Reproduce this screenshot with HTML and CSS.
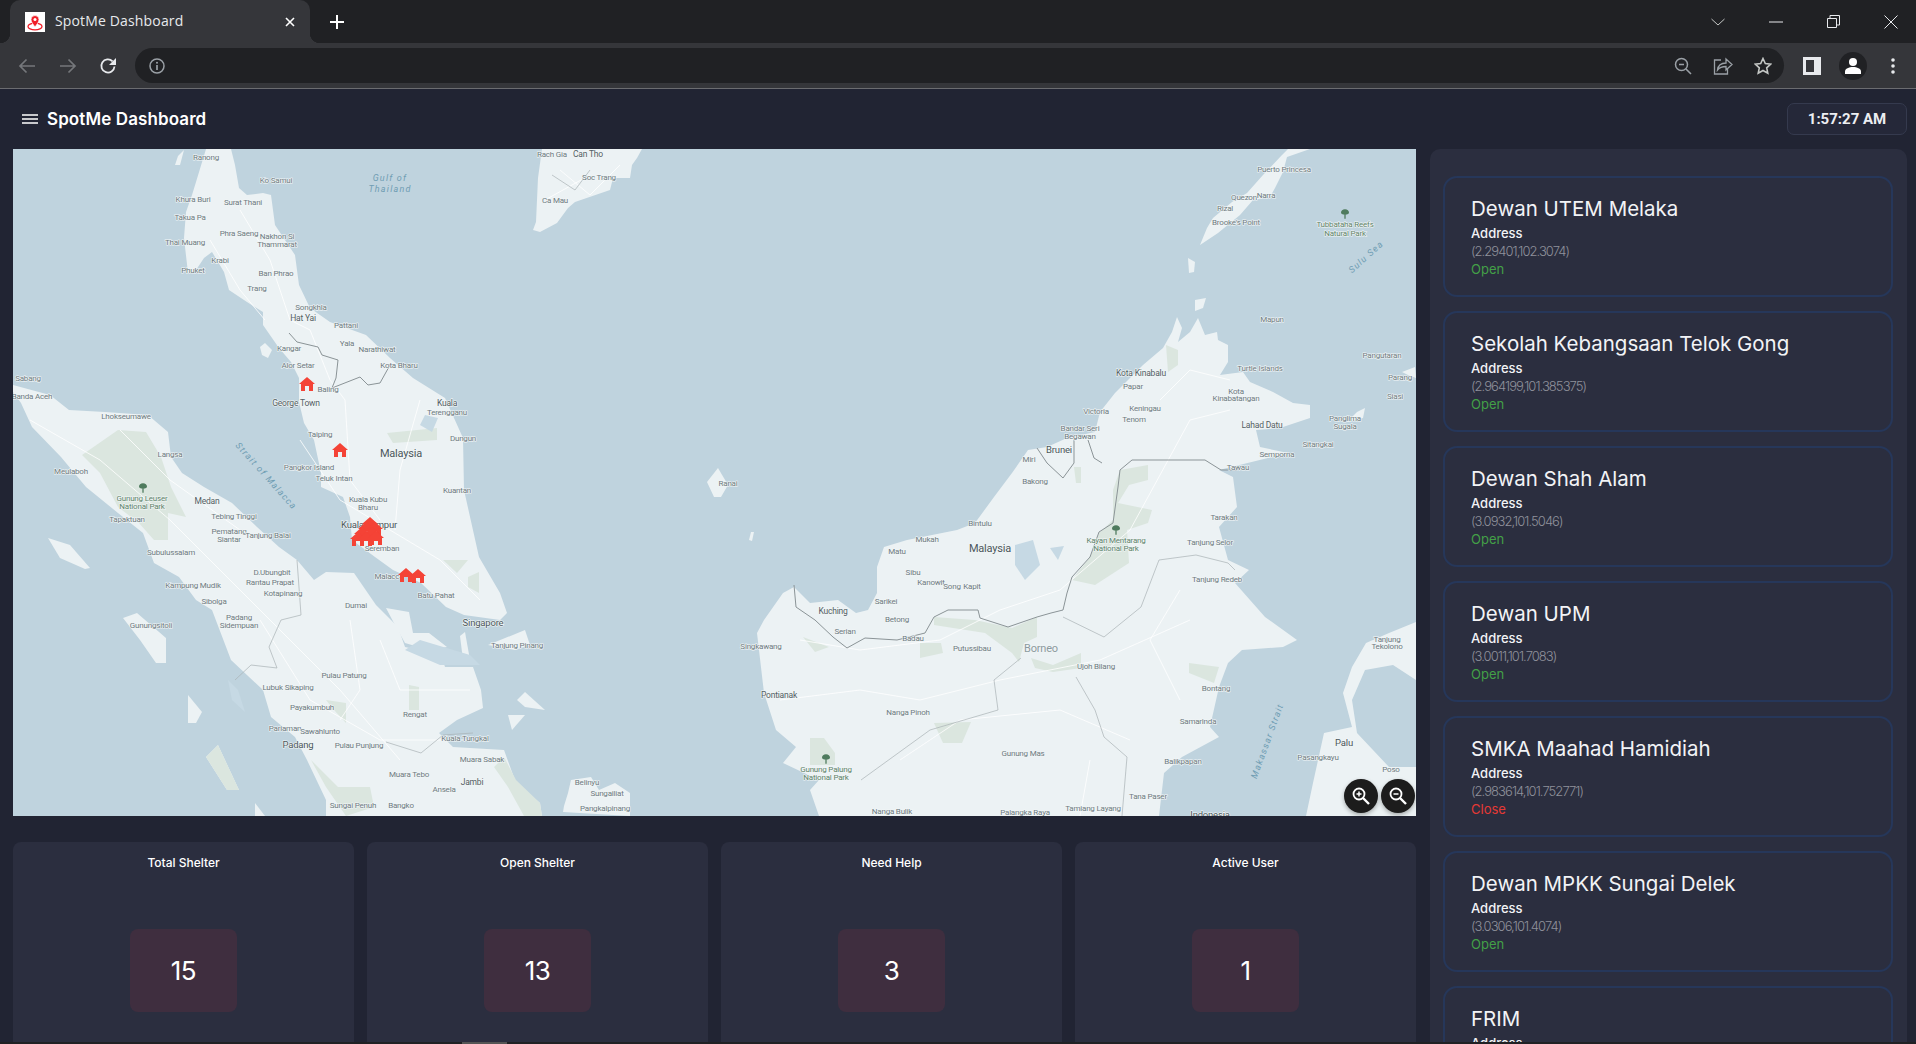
FILE: index.html
```html
<!DOCTYPE html>
<html lang="en">
<head>
    <meta charset="UTF-8">
    <meta name="viewport" content="width=device-width, initial-scale=1.0">
    <title>SpotMe Dashboard</title>
    <link rel="stylesheet" href="styles.css">
</head>
<body>
    <div class="tabstrip">
        <div class="tab">
            <span class="favicon">
                <svg width="20" height="20" viewBox="0 0 20 20">
                    <ellipse cx="10" cy="14.5" rx="7" ry="3.4" fill="none" stroke="#f01e28" stroke-width="1.3"/>
                    <path d="M10 15c-2-3-4-5-4-7.5a4 4 0 0 1 8 0C14 10 12 12 10 15z" fill="#f01e28" stroke="#fff" stroke-width=".7"/>
                    <circle cx="10" cy="7.5" r="1.5" fill="#fff"/>
                </svg>
            </span>
            <span class="tab-title">SpotMe Dashboard</span>
            <svg class="tab-close" width="10" height="10" viewBox="0 0 10 10"><path d="M1 1l8 8M9 1l-8 8" stroke="#fff" stroke-width="1.6"/></svg>
        </div>
        <svg class="new-tab" width="16" height="16" viewBox="0 0 16 16"><path d="M8 1v14M1 8h14" stroke="#fff" stroke-width="2"/></svg>
        <div class="window-btns">
            <svg width="14" height="8" viewBox="0 0 14 8"><path d="M.5 1L7 7l6.500-6" fill="none" stroke="#c4c7c5" stroke-width="1"/></svg>
            <svg width="14" height="2" viewBox="0 0 14 2"><path d="M0 1h14" stroke="#e8eaed" stroke-width="1"/></svg>
            <svg width="13" height="13" viewBox="0 0 13 13"><path d="M.5 3.500h9v9h-9zM3 3.500V.5h9.500V10H9.500" fill="none" stroke="#e8eaed" stroke-width="1"/></svg>
            <svg width="14" height="14" viewBox="0 0 14 14"><path d="M.5.5l13 13M13.500.5l-13 13" stroke="#e8eaed" stroke-width="1"/></svg>
        </div>
    </div>

    <div class="toolbar">
        <div class="nav-btns">
            <svg width="18" height="16" viewBox="0 0 18 16"><path d="M17 8H2M8.500 1.500L2 8l6.500 6.500" fill="none" stroke="#75777b" stroke-width="1.700"/></svg>
            <svg width="18" height="16" viewBox="0 0 18 16"><path d="M1 8h15M9.500 1.500L16 8l-6.500 6.500" fill="none" stroke="#75777b" stroke-width="1.700"/></svg>
            <svg class="reload" width="18" height="18" viewBox="0 0 18 18"><path d="M15.500 9.500A6.600 6.600 0 1 1 13.600 4.300" fill="none" stroke="#e8eaed" stroke-width="1.800"/><path d="M17 1v7h-7z" fill="#e8eaed"/></svg>
        </div>
        <div class="omnibox">
            <svg width="16" height="16" viewBox="0 0 16 16"><circle cx="8" cy="8" r="7" fill="none" stroke="#9aa0a6" stroke-width="1.500"/><path d="M8 7v5" stroke="#9aa0a6" stroke-width="1.700"/><circle cx="8" cy="4.800" r="1" fill="#9aa0a6"/></svg>
            <div class="omni-right">
                <svg width="18" height="18" viewBox="0 0 18 18"><circle cx="7.500" cy="7.500" r="6" fill="none" stroke="#9aa0a6" stroke-width="1.500"/><path d="M5 7.500h5M12 12l5 5" stroke="#9aa0a6" stroke-width="1.600"/></svg>
                <svg width="20" height="18" viewBox="0 0 20 18"><path d="M8 3H1.500v14h13v-5" fill="none" stroke="#9aa0a6" stroke-width="1.300"/><path d="M4.500 13c.5-4 3.500-7 8.500-7V2l6 5.500-6 5.500V9.500c-4 0-6.500 1-8.500 3.500z" fill="none" stroke="#9aa0a6" stroke-width="1.300"/></svg>
                <svg width="18" height="18" viewBox="0 0 18 18"><path d="M9 1.500l2.300 5 5.400.6-4 3.700 1.100 5.400L9 13.500l-4.800 2.700 1.100-5.400-4-3.700 5.400-.6z" fill="none" stroke="#c4c7c5" stroke-width="1.600"/></svg>
            </div>
        </div>
        <div class="toolbar-right">
            <svg width="18" height="18" viewBox="0 0 18 18"><path d="M0 0h18v18H0z" fill="#e8eaed"/><path d="M3 3h8v12H3z" fill="#35363a"/></svg>
            <span class="avatar">
                <svg width="18" height="18" viewBox="0 0 18 18"><circle cx="9" cy="5" r="4" fill="#fff"/><path d="M1 17v-2.500C1 11.500 5 10 9 10s8 1.500 8 4.500V17z" fill="#fff"/></svg>
            </span>
            <svg class="dots" width="4" height="18" viewBox="0 0 4 18"><circle cx="2" cy="3" r="1.800" fill="#e8eaed"/><circle cx="2" cy="9" r="1.800" fill="#e8eaed"/><circle cx="2" cy="15" r="1.800" fill="#e8eaed"/></svg>
        </div>
    </div>

    <div class="page">
        <header class="header">
            <div class="brand">
                <svg width="16" height="10" viewBox="0 0 16 10"><path d="M0 1h16M0 5h16M0 9h16" stroke="#fff" stroke-width="1.600"/></svg>
                <h1>SpotMe Dashboard</h1>
            </div>
            <div class="clock">1:57:27 AM</div>
        </header>

        <div class="content">
            <div class="main">
                <div class="map">
                    <svg class="map-svg" width="1403" height="667" viewBox="13 149 1403 667">
                        <defs>
                            <symbol id="house" viewBox="0 0 16 14"><path d="M8 0l8 7h-2v7h-4V9H6v5H2V7H0z"/></symbol>
                            <symbol id="tree" viewBox="0 0 10 12"><path d="M5 0C8 0 10 2 10 4S8 6.500 5.800 6.500V12H4.200V6.500C2 6.500 0 6 0 4S2 0 5 0z"/></symbol>
                        </defs>
                        <rect x="13" y="149" width="1403" height="667" class="sea"/>

                        <g class="land">
                            <!-- malay peninsula -->
                            <path d="M206 149L196 182 192 195 186 212 184 238 188 273 194 273 204 258 212 252 224 272 229 290 247 302 263 312 263 325 279 348 291 362 299 378 299 402 304 423 314 440 321 473 321 487 343 497 350 517 352 540 375 557 393 570 421 583 446 607 464 615 500 620 507 613 500 593 479 557 464 490 463 438 445 398 413 378 390 358 366 335 330 322 310 308 299 285 295 255 275 225 271 195 263 193 247 195 239 188 235 165 231 149z"/>
                            <!-- sumatra -->
                            <path d="M13 385L50 395 69 410 105 412 148 415 168 432 171 457 182 473 204 487 232 503 257 527 279 547 297 560 314 580 326 572 354 573 376 605 398 627 405 647 441 655 445 667 473 667 481 690 483 708 457 720 439 733 453 747 504 750 516 783 540 803 542 816 326 816 326 800 307 760 295 737 271 717 263 690 231 660 212 610 196 600 179 577 154 563 143 533 118 513 86 487 61 457 32 427 21 403 13 392z"/>
                            <path d="M386 608L409 612 413 633 429 633 447 647 429 650 405 643 396 627z"/>
                            <path d="M48 538L70 545 90 568 85 569 60 558z"/>
                            <path d="M123 618L137 613 166 638 166 663 156 663 140 640z"/>
                            <path d="M206 757L218 745 239 790 227 790z"/>
                            <path d="M188 695L202 712 196 723 188 723z"/>
                            <path d="M255 803L265 816 255 816z"/>
                            <path d="M564 806L568 793 571 780 591 777 599 790 615 783 630 793 630 816 563 812z"/>
                            <path d="M488 645L525 630 530 645 515 650z"/>
                            <path d="M517 700L525 692 545 710 525 707z"/>
                            <path d="M508 715L525 715 512 730z"/>
                            <path d="M460 636L465 632 470 660 463 660z"/>
                            <path d="M260 347L265 343 272 350 268 358 262 355z"/>
                            <path d="M178 156L184 150 180 165 175 165z"/>
                            <!-- vietnam tip -->
                            <path d="M542 149L538 178 536 222 533 230 540 232 557 223 568 208 575 202 610 190 613 178 630 178 632 165 637 158 642 149z"/>
                            <!-- borneo -->
                            <path d="M1177 317L1182 328 1178 342 1190 332 1198 318 1205 335 1217 332 1218 340 1228 345 1228 362 1220 375 1243 372 1250 382 1273 392 1293 403 1310 405 1310 418 1280 428 1256 430 1260 447 1288 453 1219 470 1233 477 1237 507 1219 527 1228 560 1249 570 1235 583 1265 617 1297 640 1283 647 1242 650 1228 663 1219 687 1210 727 1219 737 1182 757 1164 773 1159 816 819 816 810 790 819 780 783 763 796 747 776 730 764 693 757 633 764 620 783 593 794 587 810 603 838 600 856 613 868 610 877 593 877 567 884 547 907 540 957 530 975 523 994 497 1012 473 1028 450 1047 447 1067 438 1095 432 1100 412 1115 393 1143 365 1163 348 1172 332z"/>
                            <!-- sulawesi -->
                            <path d="M1416 622L1389 633 1366 643 1352 667 1343 693 1352 727 1324 733 1313 783 1306 816 1416 816 1416 767 1389 767 1357 733 1352 700 1365 670 1393 665 1416 680z"/>
                            <!-- palawan and small islands -->
                            <path d="M1288 149L1282 155 1263 175 1247 193 1232 202 1213 218 1207 228 1200 245 1218 233 1240 215 1253 200 1270 197 1275 188 1283 172 1287 157 1310 149z"/>
                            <path d="M1188 258L1195 262 1194 272 1189 273z"/>
                            <path d="M1195 300L1206 298 1203 308 1195 311z"/>
                            <path d="M1402 372L1415 367 1416 378 1408 375z"/>
                            <path d="M1357 412L1365 408 1363 418 1347 422z"/>
                            <path d="M707 482L718 468 728 485 721 497 714 497z"/>
                            <path d="M751 532L754 532 752 541 749 540z"/>
                        </g>

                        <g class="park">
                            <path d="M1120 470L1148 465 1148 480 1129 485 1118 503 1152 510 1148 523 1127 530 1129 563 1095 585 1072 580 1090 557 1099 533 1113 520 1113 490z"/>
                            <path d="M934 617L975 620 1012 628 1037 617 1037 637 1024 643 1019 662 1012 653 985 633 934 625z"/>
                            <path d="M1031 658L1053 665 1081 653 1081 668 1053 672 1035 668z"/>
                            <path d="M920 643L941 643 943 653 920 658z"/>
                            <path d="M1189 663L1219 667 1214 683 1189 673z"/>
                            <path d="M934 723L971 722 962 743 943 743z"/>
                            <path d="M803 637L829 647 815 652z"/>
                            <path d="M810 738L824 738 835 753 835 765 810 765z"/>
                            <path d="M1166 345L1178 350 1178 365 1168 372z"/>
                            <path d="M1074 467L1081 467 1081 483 1076 483z"/>
                            <path d="M82 455L118 430 146 432 161 457 171 487 186 517 168 513 168 540 154 540 139 523 118 507 100 473z"/>
                            <path d="M387 433L437 428 437 440 393 443z"/>
                            <path d="M443 560L468 560 457 573z"/>
                            <path d="M468 577L479 572 479 593 468 587z"/>
                            <path d="M311 760L338 787 370 787 374 807 346 816 326 787z"/>
                            <path d="M494 767L504 757 516 780 540 803 542 816 524 816 508 787z"/>
                            <path d="M409 685L419 687 419 710 409 710z"/>
                            <path d="M326 700L346 703 346 723 334 710z"/>
                            <path d="M206 757L218 745 239 790 227 790z"/>
                        </g>

                        <g class="water">
                            <path d="M1015 545L1033 540 1040 565 1025 580 1015 565z"/>
                            <path d="M1050 548L1064 546 1058 560z"/>
                            <path d="M425 415L438 418 432 432 420 425z"/>
                            <path d="M228 680L238 690 245 712 232 700z"/>
                            <path d="M420 640L470 655 480 665 440 665 405 650z"/>
                        </g>

                        <g class="roads">
                            <path d="M300 440L340 500 390 530 440 560 480 600M345 400L350 480 380 520M420 400L400 470 395 530M310 330L330 380 345 400M240 210L270 260 290 320 310 330M210 240L240 290 265 320"/>
                            <path d="M30 420L100 460 170 520 230 580 290 640 340 690 400 760M120 430L170 480 240 530M260 620L310 700 380 740 470 740M350 620L360 690 340 720M380 640L400 690 470 690"/>
                            <path d="M800 640L860 650 940 640 1000 610 1060 590 1130 530 1190 420 1230 410M780 700L860 690 920 700 1000 680 1100 660 1190 620M1180 700L1150 640 1180 590M900 760L960 720 1060 710 1130 740M1090 760L1080 816M1160 400L1190 370 1230 380"/>
                            <path d="M560 170L590 195 620 165M545 200L590 175"/>
                        </g>

                        <g class="borders">
                            <path d="M289 333L297 342 318 347 322 355 338 360 336 378 332 388 360 377 368 385 380 383 390 365"/>
                            <path d="M794 585L796 607 815 620 833 637 847 648 865 638 897 640 925 633 934 617 948 610 978 610 980 618 1008 627 1037 617 1051 613 1063 610 1067 593 1072 577 1090 557 1099 532 1113 523 1118 487 1120 470 1132 460 1164 460 1205 460 1221 470 1237 470"/>
                            <path d="M1037 448L1047 463 1063 478 1074 463 1074 440M1088 440L1094 458 1102 463"/>
                            <path class="thin" d="M1159 560L1196 555 1228 563 1235 570M1159 560L1141 607 1104 637 1063 617M1021 658L994 680 998 710 930 730 861 780M1076 677L1095 710 1104 737 1127 757 1122 816"/>
                            <path class="thin" d="M235 680L251 665 277 668 269 647 281 620 301 615 297 560M386 742L421 753 443 735 473 733"/>
                            <path class="thin" d="M552 175L575 190 590 170"/>
                        </g>

                        <g class="labels">
                            <text x="206" y="160">Ranong</text>
                            <text x="276" y="183">Ko Samui</text>
                            <text x="193" y="202">Khura Buri</text>
                            <text x="243" y="205">Surat Thani</text>
                            <text x="190" y="220">Takua Pa</text>
                            <text x="239" y="236">Phra Saeng</text>
                            <text x="277" y="239">Nakhon Si</text>
                            <text x="277" y="247">Thammarat</text>
                            <text x="185" y="245">Thai Muang</text>
                            <text x="220" y="263">Krabi</text>
                            <text x="193" y="273">Phuket</text>
                            <text x="276" y="276">Ban Phrao</text>
                            <text x="257" y="291">Trang</text>
                            <text x="311" y="310">Songkhla</text>
                            <text x="303" y="321" class="dark">Hat Yai</text>
                            <text x="346" y="328">Pattani</text>
                            <text x="347" y="346">Yala</text>
                            <text x="377" y="352">Narathiwat</text>
                            <text x="289" y="351">Kangar</text>
                            <text x="298" y="368">Alor Setar</text>
                            <text x="399" y="368">Kota Bharu</text>
                            <text x="28" y="381">Sabang</text>
                            <text x="32" y="399">Banda Aceh</text>
                            <text x="328" y="392">Baling</text>
                            <text x="296" y="406" class="dark">George Town</text>
                            <text x="447" y="406" class="dark">Kuala</text>
                            <text x="447" y="415">Terengganu</text>
                            <text x="126" y="419">Lhokseumawe</text>
                            <text x="320" y="437">Taiping</text>
                            <text x="463" y="441">Dungun</text>
                            <text x="552" y="157">Rach Gia</text>
                            <text x="588" y="157" class="dark">Can Tho</text>
                            <text x="599" y="180">Soc Trang</text>
                            <text x="555" y="203">Ca Mau</text>
                            <text x="170" y="457">Langsa</text>
                            <text x="71" y="474">Meulaboh</text>
                            <text x="207" y="504" class="dark">Medan</text>
                            <text x="234" y="519">Tebing Tinggi</text>
                            <text x="229" y="534">Pematang</text>
                            <text x="229" y="542">Siantar</text>
                            <text x="268" y="538">Tanjung Balai</text>
                            <text x="127" y="522">Tapaktuan</text>
                            <text x="171" y="555">Subulussalam</text>
                            <text x="334" y="481">Teluk Intan</text>
                            <text x="309" y="470">Pangkor Island</text>
                            <text x="401" y="457" class="big">Malaysia</text>
                            <text x="457" y="493">Kuantan</text>
                            <text x="368" y="502">Kuala Kubu</text>
                            <text x="368" y="510">Bharu</text>
                            <text x="369" y="528" class="mid">Kuala Lumpur</text>
                            <text x="382" y="551">Seremban</text>
                            <text x="389" y="579">Malacca</text>
                            <text x="436" y="598">Batu Pahat</text>
                            <text x="483" y="626" class="mid">Singapore</text>
                            <text x="270" y="585">Rantau Prapat</text>
                            <text x="272" y="575">D.Ubungbit</text>
                            <text x="193" y="588">Kampung Mudik</text>
                            <text x="214" y="604">Sibolga</text>
                            <text x="283" y="596">Kotapinang</text>
                            <text x="239" y="620">Padang</text>
                            <text x="239" y="628">Sidempuan</text>
                            <text x="151" y="628">Gunungsitoli</text>
                            <text x="356" y="608">Dumai</text>
                            <text x="517" y="648">Tanjung Pinang</text>
                            <text x="344" y="678">Pulau Patung</text>
                            <text x="288" y="690">Lubuk Sikaping</text>
                            <text x="312" y="710">Payakumbuh</text>
                            <text x="415" y="717">Rengat</text>
                            <text x="285" y="731">Pariaman</text>
                            <text x="320" y="734">Sawahlunto</text>
                            <text x="465" y="741">Kuala Tungkal</text>
                            <text x="298" y="748" class="mid">Padang</text>
                            <text x="359" y="748">Pulau Punjung</text>
                            <text x="482" y="762">Muara Sabak</text>
                            <text x="409" y="777">Muara Tebo</text>
                            <text x="472" y="785" class="dark">Jambi</text>
                            <text x="353" y="808">Sungai Penuh</text>
                            <text x="401" y="808">Bangko</text>
                            <text x="444" y="792">Ansela</text>
                            <text x="587" y="785">Belinyu</text>
                            <text x="607" y="796">Sungailiat</text>
                            <text x="605" y="811">Pangkalpinang</text>
                            <text x="1272" y="322">Mapun</text>
                            <text x="1382" y="358">Pangutaran</text>
                            <text x="1260" y="371">Turtle Islands</text>
                            <text x="1400" y="380">Parang</text>
                            <text x="1395" y="399">Siasi</text>
                            <text x="1141" y="376" class="dark">Kota Kinabalu</text>
                            <text x="1133" y="389">Papar</text>
                            <text x="1236" y="394">Kota</text>
                            <text x="1236" y="401">Kinabatangan</text>
                            <text x="1096" y="414">Victoria</text>
                            <text x="1145" y="411">Keningau</text>
                            <text x="1134" y="422">Tenom</text>
                            <text x="1345" y="421">Panglima</text>
                            <text x="1345" y="429">Sugala</text>
                            <text x="1262" y="428" class="dark">Lahad Datu</text>
                            <text x="1080" y="431">Bandar Seri</text>
                            <text x="1080" y="439">Begawan</text>
                            <text x="1318" y="447">Sitangkai</text>
                            <text x="1059" y="453" class="mid">Brunei</text>
                            <text x="1277" y="457">Semporna</text>
                            <text x="1029" y="462">Miri</text>
                            <text x="1238" y="470">Tawau</text>
                            <text x="1035" y="484">Bakong</text>
                            <text x="728" y="486">Ranai</text>
                            <text x="1224" y="520">Tarakan</text>
                            <text x="980" y="526">Bintulu</text>
                            <text x="927" y="542">Mukah</text>
                            <text x="1210" y="545">Tanjung Selor</text>
                            <text x="990" y="552" class="big">Malaysia</text>
                            <text x="897" y="554">Matu</text>
                            <text x="913" y="575">Sibu</text>
                            <text x="931" y="585">Kanowit</text>
                            <text x="952" y="589">Song</text>
                            <text x="972" y="589">Kapit</text>
                            <text x="1217" y="582">Tanjung Redeb</text>
                            <text x="886" y="604">Sarikei</text>
                            <text x="833" y="614" class="dark">Kuching</text>
                            <text x="897" y="622">Betong</text>
                            <text x="845" y="634">Serian</text>
                            <text x="913" y="641">Badau</text>
                            <text x="761" y="649">Singkawang</text>
                            <text x="1387" y="642">Tanjung</text>
                            <text x="1387" y="649">Tekolono</text>
                            <text x="972" y="651">Putussibau</text>
                            <text x="1041" y="652" class="region">Borneo</text>
                            <text x="1096" y="669">Ujoh Bilang</text>
                            <text x="1216" y="691">Bontang</text>
                            <text x="779" y="698" class="dark">Pontianak</text>
                            <text x="908" y="715">Nanga Pinoh</text>
                            <text x="1198" y="724">Samarinda</text>
                            <text x="1344" y="746" class="mid">Palu</text>
                            <text x="1318" y="760">Pasangkayu</text>
                            <text x="1023" y="756">Gunung Mas</text>
                            <text x="1183" y="764">Balikpapan</text>
                            <text x="1391" y="772">Poso</text>
                            <text x="1148" y="799">Tana Paser</text>
                            <text x="1093" y="811">Tamiang Layang</text>
                            <text x="892" y="814">Nanga Bulik</text>
                            <text x="1025" y="815">Palangka Raya</text>
                            <text x="1210" y="818" class="mid">Indonesia</text>
                            <text x="1284" y="172">Puerto Princesa</text>
                            <text x="1244" y="200">Quezon</text>
                            <text x="1266" y="198">Narra</text>
                            <text x="1225" y="211">Rizal</text>
                            <text x="1236" y="225">Brooke's Point</text>
                        </g>

                        <g class="labels park-labels">
                            <text x="142" y="501">Gunung Leuser</text>
                            <text x="142" y="509">National Park</text>
                            <text x="1116" y="543">Kayan Mentarang</text>
                            <text x="1116" y="551">National Park</text>
                            <text x="826" y="772">Gunung Palung</text>
                            <text x="826" y="780">National Park</text>
                            <text x="1345" y="227">Tubbataha Reefs</text>
                            <text x="1345" y="236">Natural Park</text>
                        </g>

                        <g class="labels sea-labels">
                            <text x="390" y="181">Gulf of</text>
                            <text x="390" y="192">Thailand</text>
                            <text transform="translate(264 478) rotate(48)">Strait of Malacca</text>
                            <text transform="translate(1270 742) rotate(-70)">Makassar Strait</text>
                            <text transform="translate(1368 259) rotate(-42)">Sulu Sea</text>
                        </g>

                        <g class="trees">
                            <use href="#tree" x="139" y="483" width="8" height="10"/>
                            <use href="#tree" x="1112" y="525" width="8" height="10"/>
                            <use href="#tree" x="822" y="754" width="8" height="10"/>
                            <use href="#tree" x="1341" y="209" width="8" height="10"/>
                        </g>

                        <g class="markers">
                            <use href="#house" x="299" y="377" width="16" height="14"/>
                            <use href="#house" x="332" y="443" width="16" height="14"/>
                            <use href="#house" x="362" y="517" width="16" height="14"/>
                            <use href="#house" x="358" y="522" width="16" height="14"/>
                            <use href="#house" x="367" y="522" width="16" height="14"/>
                            <use href="#house" x="354" y="527" width="16" height="14"/>
                            <use href="#house" x="364" y="527" width="16" height="14"/>
                            <use href="#house" x="350" y="532" width="16" height="14"/>
                            <use href="#house" x="358" y="532" width="16" height="14"/>
                            <use href="#house" x="368" y="531" width="16" height="14"/>
                            <use href="#house" x="398" y="568" width="16" height="14"/>
                            <use href="#house" x="410" y="569" width="16" height="14"/>
                        </g>
                    </svg>
                    <div class="map-controls">
                        <button class="map-btn">
                            <svg width="20" height="20" viewBox="0 0 20 20"><circle cx="8" cy="8" r="5.500" fill="none" stroke="#fff" stroke-width="1.800"/><path d="M5.500 8h5M8 5.500v5" stroke="#fff" stroke-width="1.500"/><path d="M12 12l6 6" stroke="#fff" stroke-width="2.400"/></svg>
                        </button>
                        <button class="map-btn">
                            <svg width="20" height="20" viewBox="0 0 20 20"><circle cx="8" cy="8" r="5.500" fill="none" stroke="#fff" stroke-width="1.800"/><path d="M5.500 8h5" stroke="#fff" stroke-width="1.500"/><path d="M12 12l6 6" stroke="#fff" stroke-width="2.400"/></svg>
                        </button>
                    </div>
                </div>

                <div class="stats">
                    <div class="stat">
                        <div class="stat-title">Total Shelter</div>
                        <div class="stat-num">15</div>
                    </div>
                    <div class="stat">
                        <div class="stat-title">Open Shelter</div>
                        <div class="stat-num">13</div>
                    </div>
                    <div class="stat">
                        <div class="stat-title">Need Help</div>
                        <div class="stat-num">3</div>
                    </div>
                    <div class="stat">
                        <div class="stat-title">Active User</div>
                        <div class="stat-num">1</div>
                    </div>
                </div>
            </div>

            <aside class="panel">
                <div class="shelter">
                    <h3>Dewan UTEM Melaka</h3>
                    <div class="addr">Address</div>
                    <div class="coords">(2.29401,102.3074)</div>
                    <div class="open">Open</div>
                </div>
                <div class="shelter">
                    <h3>Sekolah Kebangsaan Telok Gong</h3>
                    <div class="addr">Address</div>
                    <div class="coords">(2.964199,101.385375)</div>
                    <div class="open">Open</div>
                </div>
                <div class="shelter">
                    <h3>Dewan Shah Alam</h3>
                    <div class="addr">Address</div>
                    <div class="coords">(3.0932,101.5046)</div>
                    <div class="open">Open</div>
                </div>
                <div class="shelter">
                    <h3>Dewan UPM</h3>
                    <div class="addr">Address</div>
                    <div class="coords">(3.0011,101.7083)</div>
                    <div class="open">Open</div>
                </div>
                <div class="shelter">
                    <h3>SMKA Maahad Hamidiah</h3>
                    <div class="addr">Address</div>
                    <div class="coords">(2.983614,101.752771)</div>
                    <div class="close">Close</div>
                </div>
                <div class="shelter">
                    <h3>Dewan MPKK Sungai Delek</h3>
                    <div class="addr">Address</div>
                    <div class="coords">(3.0306,101.4074)</div>
                    <div class="open">Open</div>
                </div>
                <div class="shelter">
                    <h3>FRIM</h3>
                    <div class="addr">Address</div>
                </div>
            </aside>
        </div>
    </div>

    <div class="bottom-strip"><span class="thumb"></span></div>
</body>
</html>
```
FILE: styles.css
```css
* {
    box-sizing: border-box;
}
html, body {
    margin: 0;
    height: 100%;
    overflow: hidden;
}
body {
    display: flex;
    flex-direction: column;
    font-family: Inter, "Noto Sans", sans-serif;
    background-color: #212433;
    color: #fff;
}

/* browser chrome */
.tabstrip {
    height: 43px;
    flex: none;
    display: flex;
    align-items: center;
    padding-left: 10px;
    background-color: #202124;
}
.tab {
    position: relative;
    width: 300px;
    height: 43px;
    flex: none;
    display: flex;
    align-items: center;
    padding: 0 15px;
    gap: 10px;
    background-color: #35363a;
    border-radius: 10px 10px 0 0;
}
.tab::before,
.tab::after {
    content: "";
    position: absolute;
    bottom: 0;
    width: 10px;
    height: 10px;
}
.tab::before {
    left: -10px;
    background: radial-gradient(circle at 0 0, transparent 10px, #35363a 10.500px);
}
.tab::after {
    right: -10px;
    background: radial-gradient(circle at 100% 0, transparent 10px, #35363a 10.500px);
}
.favicon {
    width: 20px;
    height: 20px;
    flex: none;
    display: block;
    background-color: #fff;
}
.favicon svg {
    display: block;
}
.tab-title {
    flex: 1;
    padding-bottom: 2px;
    font-family: "Open Sans", sans-serif;
    font-size: 14px;
    letter-spacing: 0.15px;
    color: #e8eaed;
}
.new-tab {
    margin-left: 19px;
}
.window-btns {
    margin-left: auto;
    display: flex;
    align-items: center;
    gap: 44px;
    padding-right: 18px;
}
.toolbar {
    height: 46px;
    flex: none;
    display: flex;
    align-items: center;
    background-color: #35363a;
    border-bottom: 1px solid #6b6c70;
}
.nav-btns {
    width: 135px;
    flex: none;
    display: flex;
    align-items: center;
    gap: 23px;
    padding-left: 18px;
}
.reload {
    margin-left: -1px;
}
.omnibox {
    width: 1649px;
    height: 35px;
    flex: none;
    display: flex;
    align-items: center;
    padding: 0 12px 0 14px;
    border-radius: 18px;
    background-color: #202124;
}
.omni-right {
    margin-left: auto;
    display: flex;
    align-items: center;
    gap: 21px;
}
.toolbar-right {
    flex: 1;
    display: flex;
    align-items: center;
    padding-left: 19px;
}
.avatar {
    width: 28px;
    height: 28px;
    margin-left: 18px;
    display: flex;
    align-items: center;
    justify-content: center;
    border-radius: 50%;
    background-color: #202124;
}
.dots {
    margin-left: 24px;
}

/* page */
.page {
    flex: 1;
    min-height: 0;
    display: flex;
    flex-direction: column;
    padding: 0 9px 0 13px;
    overflow: hidden;
}
.header {
    height: 60px;
    flex: none;
    display: flex;
    align-items: center;
    justify-content: space-between;
}
.brand {
    display: flex;
    align-items: center;
    gap: 9px;
    padding-left: 9px;
}
.brand h1 {
    margin: 0;
    font-size: 17px;
    font-weight: 600;
    letter-spacing: 0.1px;
}
.clock {
    width: 120px;
    height: 32px;
    line-height: 30px;
    text-align: center;
    font-family: Roboto, sans-serif;
    font-size: 15px;
    font-weight: 700;
    color: #eceef2;
    background-color: #252839;
    border: 1px solid #353a4e;
    border-radius: 7px;
}
.content {
    flex: 1;
    min-height: 0;
    display: flex;
    gap: 14px;
}
.main {
    width: 1403px;
    flex: none;
    overflow: hidden;
}
.map {
    position: relative;
    height: 667px;
    background-color: #bfd3de;
}
.map-svg {
    display: block;
}
.sea {
    fill: #bfd3de;
}
.land path {
    fill: #ecf2f4;
}
.park path {
    fill: #dbe6df;
}
.water path {
    fill: #c6d9e4;
}
.roads path {
    fill: none;
    stroke: #fff;
    stroke-width: 0.8;
}
.borders path {
    fill: none;
    stroke: #8b9497;
    stroke-width: 1;
}
.borders path.thin {
    stroke: #a9b2b5;
    stroke-width: 0.7;
}
.labels text {
    font-family: Roboto, sans-serif;
    font-size: 8px;
    letter-spacing: -0.2px;
    text-anchor: middle;
    fill: #6d7a80;
    stroke: #f2f6f7;
    stroke-width: 1.2px;
    paint-order: stroke;
}
.labels text.dark {
    font-size: 8.5px;
    fill: #525e64;
}
.labels text.mid {
    font-size: 9.5px;
    fill: #4a565b;
}
.labels text.big {
    font-size: 11px;
    fill: #4a565b;
}
.labels text.region {
    font-size: 11px;
    fill: #8c9a9e;
}
.park-labels text {
    fill: #5d8269;
}
.sea-labels text {
    font-size: 9px;
    font-style: italic;
    letter-spacing: 1.2px;
    fill: #6f9db3;
    stroke: none;
}
.trees {
    fill: #4f7b5e;
}
.markers {
    fill: #f44336;
}
.map-controls {
    position: absolute;
    right: 1px;
    bottom: 3px;
    display: flex;
    align-items: center;
    gap: 3px;
}
.map-btn {
    width: 34px;
    height: 34px;
    padding: 0;
    display: flex;
    align-items: center;
    justify-content: center;
    border: 0;
    border-radius: 50%;
    background-color: #1c1c1c;
    box-shadow: 0 2px 4px rgba(0, 0, 0, 0.3);
}

.stats {
    margin-top: 26px;
    display: grid;
    grid-template-columns: repeat(4, 1fr);
    gap: 13px;
}
.stat {
    height: 240px;
    padding-top: 13px;
    display: flex;
    flex-direction: column;
    align-items: center;
    background-color: #2b2e3f;
    border-radius: 8px;
}
.stat-title {
    line-height: 16px;
    font-size: 12px;
    font-weight: 500;
}
.stat-num {
    width: 107px;
    height: 83px;
    margin-top: 58px;
    display: flex;
    align-items: center;
    justify-content: center;
    font-size: 26px;
    letter-spacing: -0.5px;
    background-color: #3f2e3f;
    border-radius: 8px;
}

.panel {
    width: 477px;
    flex: none;
    padding: 27px 14px 0 13px;
    display: flex;
    flex-direction: column;
    gap: 14px;
    overflow: hidden;
    background-color: #2b2e3f;
    border-radius: 10px 10px 0 0;
}
.shelter {
    height: 121px;
    flex: none;
    padding: 15px 26px 0;
    border: 2px solid #26375a;
    border-radius: 14px;
}
.shelter h3 {
    margin: 0;
    line-height: 31px;
    font-size: 20.5px;
    font-weight: 400;
    color: #f2f3f6;
}
.addr, .coords, .open, .close {
    line-height: 18px;
    font-size: 13px;
}
.addr {
    font-weight: 500;
    color: #f2f3f6;
}
.coords {
    font-weight: 300;
    letter-spacing: -0.95px;
    color: #8f919b;
}
.open {
    color: #43a047;
}
.close {
    color: #e53935;
}

.bottom-strip {
    height: 2px;
    flex: none;
    padding-left: 462px;
    background-color: #202124;
}
.thumb {
    display: block;
    width: 45px;
    height: 2px;
    background-color: #555;
}
```
